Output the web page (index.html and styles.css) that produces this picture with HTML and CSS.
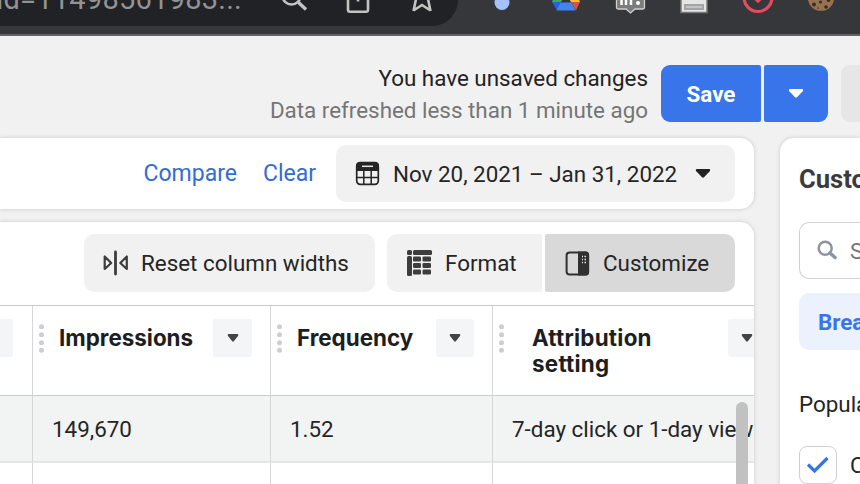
FILE: index.html
```html
<!DOCTYPE html>
<html lang="en">
<head>
<meta charset="utf-8">
<title>Ads reporting</title>
<link rel="stylesheet" href="styles.css">
</head>
<body>
<header class="browser">
  <div class="omnibox">
    <span class="url">id=11498561983...</span>
    <svg class="omni-icons" width="216" height="26" viewBox="242 0 216 26" fill="none" stroke="#c3c3c3" stroke-width="2.6">
      <circle cx="291.500" cy="-4.500" r="9"/><path d="M298 2l8 7.500" stroke-width="3.400"/>
      <path d="M348-8V10Q348 11.700 350 11.700H366Q368 11.700 368 10V-8M358-8V1.500"/>
      <path d="M413.500 11L416-1M430.500 11L428-1M413.500 10.500L422 5L430.500 10.500"/>
    </svg>
  </div>
  <svg class="extensions" width="402" height="34" viewBox="458 0 402 34">
    <circle cx="502" cy="2.500" r="7.500" fill="#a5c1fb"/>
    <path d="M552 2H561L557 10.500Z" fill="#2563d8"/><path d="M552 2L554-3H564L561 2Z" fill="#48a851"/>
    <path d="M571 2L568-3H578L580 2Z" fill="#f7bd38"/><path d="M571 2H580L576 10.500Z" fill="#dc5141"/>
    <path d="M560.500 2.500H571.500L575.500 10.500H556.500Z" fill="#4384f4"/>
    <path d="M616.500-3V7.500Q616.500 9 618 9H626L630.500 13L635 9H643Q644.500 9 644.500 7.500V-3Z" fill="#7c7c7c" stroke="#d0d2cf" stroke-width="1.300"/>
    <path d="M621.500-2V5M626-2V5M631-2V5" stroke="#fff" stroke-width="2.500"/><circle cx="638" cy="3" r="2" fill="#fff"/>
    <path d="M681-2H707V12.500H681Z" fill="#e5e5e5" stroke="#777" stroke-width="1.500"/><path d="M684 4H704V10H684Z" fill="#a4a4a4"/><path d="M686 7H702" stroke="#c5c5c5" stroke-width="2"/>
    <circle cx="758" cy="-2.500" r="14" fill="none" stroke="#e34c5c" stroke-width="3.200"/><path d="M753.500-1H762.500L758 3.300Z" fill="#e34c5c"/>
    <circle cx="821" cy="-2.500" r="13.300" fill="#947252"/><g fill="#3e2a20"><circle cx="814" cy="4.500" r="1.900"/><circle cx="820.500" cy="2" r="1.500"/><circle cx="826" cy="7" r="1.800"/><circle cx="828.500" cy="0" r="1.900"/><circle cx="818" cy="8" r=".8"/></g>
  </svg>
</header>

<section class="topbar">
  <div class="status">
    <div class="unsaved">You have unsaved changes</div>
    <div class="refreshed">Data refreshed less than 1 minute ago</div>
  </div>
  <button class="save">Save</button>
  <button class="save-menu"><svg width="16" height="11" viewBox="0 0 16 11"><path d="M2 1H14Q16 1.500 14.700 3.200L9 9.300Q8 10.200 7 9.300L1.300 3.200Q0 1.500 2 1Z" fill="#fff"/></svg></button>
  <div class="more"></div>
</section>

<main class="workspace">
  <div class="left">
    <section class="card date-card">
      <a class="link compare">Compare</a>
      <a class="link clear">Clear</a>
      <div class="date">
        <svg width="25" height="25" viewBox="0 0 25 25"><rect x="1.700" y="1.700" width="21.600" height="21.600" rx="3.500" fill="none" stroke="#252525" stroke-width="1.700"/><path d="M1 10V5Q1 1 5 1H20Q24 1 24 5V10Z" fill="#252525"/><path d="M7 5.300H18" stroke="#e5e5e5" stroke-width="1.500"/><path d="M1.500 16.500H23.500M8.800 9V23.500M16.200 9V23.500" stroke="#252525" stroke-width="1.500"/></svg>
        <span class="date-text">Nov 20, 2021 – Jan 31, 2022</span>
        <svg class="caret" width="16" height="11" viewBox="0 0 16 11"><path d="M2 1H14Q16 1.500 14.700 3.200L9 9.300Q8 10.200 7 9.300L1.300 3.200Q0 1.500 2 1Z" fill="#222"/></svg>
      </div>
    </section>

    <section class="card table-card">
      <div class="tools">
        <div class="tool reset">
          <svg width="26" height="26" viewBox="0 0 26 26" fill="none" stroke="#3d3d3d"><path d="M1.700 6.500V19L8.200 13ZM23.800 6.500V19L17.300 13Z" stroke-width="2.200" stroke-linejoin="round"/><path d="M12.500 2V24" stroke-width="2.800" stroke-linecap="round"/></svg>
          <span>Reset column widths</span>
        </div>
        <div class="tool format">
          <svg width="26" height="27" viewBox="0 0 26 27" fill="#3d3d3d"><rect width="5" height="5" rx="1.500"/><rect x="6" width="19" height="5" rx="1.500"/><rect y="6" width="5" height="20" rx="1.500"/><rect x="6" y="6.500" width="8" height="5" rx="1.300"/><rect x="15.500" y="6.500" width="8.500" height="5" rx="1.300"/><rect x="6" y="13" width="8" height="5" rx="1.300"/><rect x="15.500" y="13" width="8.500" height="5" rx="1.300"/><rect x="6" y="19.500" width="8" height="5" rx="1.300"/><rect x="15.500" y="19.500" width="8.500" height="5" rx="1.300"/></svg>
          <span>Format</span>
        </div>
        <div class="tool customize">
          <svg width="25" height="25" viewBox="0 0 25 25"><rect x="1.600" y="1.500" width="21.600" height="22" rx="3" fill="none" stroke="#303030" stroke-width="2"/><path d="M13 .5H21Q24 .5 24 4V21Q24 24.500 21 24.500H13Z" fill="#303030"/><path d="M17 5.500H18M19.500 5.500H21M17 8.500H18M19.500 8.500H21M17 11.500H18M19.500 11.500H21" stroke="#e5e5e5" stroke-width="1.300"/></svg>
          <span>Customize</span>
        </div>
      </div>

      <div class="grid">
        <div class="th edge"><i class="menu"></i></div>
        <div class="th">
          <svg class="grip" width="6" height="30" viewBox="0 0 6 30"><path d="M2.500 2.700h.01M2.500 10.700h.01M2.500 18.700h.01M2.500 26.300h.01" stroke="#cdced1" stroke-width="5" stroke-linecap="round"/></svg>
          <span class="name">Impressions</span>
          <i class="menu"><svg width="12" height="9" viewBox="0 0 12 9"><path d="M1.500 0H10.500Q12 .5 11 2L6.800 7.300Q6 8 5.200 7.300L1 2Q0 .5 1.500 0Z" fill="#444"/></svg></i>
        </div>
        <div class="th freq">
          <svg class="grip" width="6" height="30" viewBox="0 0 6 30"><path d="M2.500 2.700h.01M2.500 10.700h.01M2.500 18.700h.01M2.500 26.300h.01" stroke="#cdced1" stroke-width="5" stroke-linecap="round"/></svg>
          <span class="name">Frequency</span>
          <i class="menu"><svg width="12" height="9" viewBox="0 0 12 9"><path d="M1.500 0H10.500Q12 .5 11 2L6.800 7.300Q6 8 5.200 7.300L1 2Q0 .5 1.500 0Z" fill="#444"/></svg></i>
        </div>
        <div class="th attr">
          <svg class="grip" width="6" height="30" viewBox="0 0 6 30"><path d="M2.500 2.700h.01M2.500 10.700h.01M2.500 18.700h.01M2.500 26.300h.01" stroke="#cdced1" stroke-width="5" stroke-linecap="round"/></svg>
          <span class="name">Attribution<br>setting</span>
          <i class="menu"><svg width="12" height="9" viewBox="0 0 12 9"><path d="M1.500 0H10.500Q12 .5 11 2L6.800 7.300Q6 8 5.200 7.300L1 2Q0 .5 1.500 0Z" fill="#444"/></svg></i>
        </div>
        <div class="td edge"></div>
        <div class="td">149,670</div>
        <div class="td">1.52</div>
        <div class="td attr-value">7-day click or 1-day view</div>
        <div class="next edge"></div><div class="next"></div><div class="next"></div><div class="next"></div>
        <div class="scrollbar"></div>
      </div>
    </section>
  </div>

  <aside class="panel">
    <h2>Customize</h2>
    <div class="search">
      <svg width="21" height="21" viewBox="0 0 21 21" fill="none" stroke="#8d949f"><circle cx="8.200" cy="8.200" r="6.500" stroke-width="2.500"/><path d="M13 13L18 17.500" stroke-width="3.500" stroke-linecap="round"/></svg>
      <span>Search</span>
    </div>
    <div class="tab">Breakdowns</div>
    <div class="group">Popular</div>
    <div class="option">
      <span class="check"><svg width="26" height="20" viewBox="0 0 26 20"><path d="M3 9.500L9.500 16L22.500 3" fill="none" stroke="#3575ea" stroke-width="3.200"/></svg></span>
      <span>Campaign</span>
    </div>
  </aside>
</main>
</body>
</html>
```

FILE: styles.css
```css
* { box-sizing: border-box; }
body {
  margin: 0; width: 860px; height: 484px; overflow: hidden;
  display: flex; flex-direction: column;
  background: #f1f1f1; color: #252525;
  font: 22.4px/26px Roboto, "Liberation Sans", sans-serif;
  white-space: nowrap;
}
svg { display: block; flex: none; }
button { border: 0; padding: 0; font: inherit; }

.browser { flex: none; height: 36px; display: flex; background: #36373b; border-bottom: 2px solid #626266; }
.omnibox { width: 458px; height: 26px; display: flex; overflow: hidden; background: #212226; border-radius: 0 0 26px 0; }
.url { flex: none; width: 242px; height: 32px; margin-top: -17px; display: flex; justify-content: flex-end; color: #939395; font-size: 29px; line-height: 32px; letter-spacing: .25px; overflow: hidden; }

.topbar { flex: none; height: 102px; padding-top: 29px; display: flex; align-items: flex-start; overflow: hidden; }
.status { width: 648px; margin-right: 13px; text-align: right; line-height: 32px; margin-top: -3px; }
.status, .save, .save-menu, .more { flex: none; }
.unsaved { color: #222; }
.refreshed { color: #757575; }
.save { width: 100px; height: 57px; background: #3875ea; color: #fff; font-weight: 700; border-radius: 9px 2px 2px 9px; }
.save-menu { width: 64px; height: 57px; margin-left: 3px; background: #3875ea; border-radius: 2px 9px 9px 2px; display: flex; align-items: center; justify-content: center; }
.more { width: 19px; height: 57px; margin-left: 13px; background: #e6e6e6; border-radius: 9px 0 0 9px; }

.workspace { height: 346px; display: flex; gap: 26px; }
.left { flex: none; width: 754px; display: flex; flex-direction: column; gap: 13px; }
.card { background: #fff; box-shadow: 0 0 4px rgba(0,0,0,.17); }
.date-card { flex: none; height: 71px; padding: 7px 19px 7px 0; display: flex; align-items: center; justify-content: flex-end; border-radius: 0 14px 14px 0; }
.link { color: #356bd4; margin: 0 26px 0 0; font-size: 23px; }
.clear { margin-right: 20px; }
.date { width: 399px; height: 57px; padding-left: 19px; display: flex; align-items: center; background: #f1f1f1; border-radius: 10px; }
.date-text { width: 284px; margin: 0 18px 0 13px; }

.table-card { flex: 1; border-radius: 0 14px 0 0; overflow: hidden; display: flex; flex-direction: column; }
.tools { flex: none; height: 83px; padding: 12px 19px 0 84px; display: flex; }
.tool { height: 58px; display: flex; align-items: center; background: #f1f1f1; }
.reset { width: 291px; margin-right: 12px; padding-left: 19px; gap: 12px; border-radius: 10px; }
.format { width: 155px; margin-right: 3px; padding-left: 20px; gap: 12px; border-radius: 10px 2px 2px 10px; }
.customize { width: 190px; padding-left: 20px; gap: 13px; background: #d9d9d9; border-radius: 2px 10px 10px 2px; }

.grid { position: relative; flex: none; display: grid; grid-template-columns: 32px 238px 222px 262px; grid-template-rows: 90px 67px 22px; border-top: 1px solid #c8c8c8; }
.grid > div:not(.edge):not(.scrollbar) { border-left: 1px solid #d5d6d7; }
.th { padding: 13px 18px 0 6px; display: flex; align-items: flex-start; border-bottom: 1px solid #ccc; font: 700 22.4px/26px Inter, "Liberation Sans", sans-serif; color: #1c1e21; overflow: hidden; }
.grip { margin: 5px 0 0; }
.name { margin: 6px 0 0 14px; }
.menu { flex: none; width: 39px; height: 38px; margin-left: auto; background: #f4f5f7; border-radius: 3px; display: flex; align-items: center; justify-content: center; }
.th.edge { padding: 13px 19px 0 0; justify-content: flex-end; }
.freq { padding-right: 18px; }
.freq .menu { width: 38px; }
.attr { padding-right: 0; }
.attr .name { flex: none; width: 140px; margin-left: 27px; letter-spacing: .25px; }
.attr .menu { width: 38px; margin-left: 56px; }
.td { padding: 20px 0 0 19px; background: #f2f4f3; border-bottom: 2px solid #e4e6e5; overflow: hidden; }
.scrollbar { position: absolute; left: 736px; top: 96px; width: 12px; height: 100px; border-radius: 6px; background: #c1c1c1; }

.panel { flex: none; width: 80px; padding: 28px 0 0 19px; background: #fff; border-radius: 14px 0 0 0; box-shadow: 0 0 4px rgba(0,0,0,.17); overflow: hidden; }
.panel h2 { margin: 0 0 30px; font-size: 25.6px; line-height: 26px; color: #3b3b3b; }
.search { height: 57px; padding-left: 17px; display: flex; align-items: center; gap: 12px; border: 1px solid #d2d2d2; border-right: 0; border-radius: 10px 0 0 10px; color: #757575; }
.tab { height: 57px; margin-top: 14px; padding-left: 19px; line-height: 58px; background: #ebf1fd; color: #3875ea; font-weight: 700; border-radius: 10px 0 0 10px; }
.group { margin-top: 41px; }
.option { margin-top: 29px; display: flex; align-items: center; gap: 13px; }
.check { flex: none; width: 38px; height: 38px; display: flex; align-items: center; justify-content: center; border: 1px solid #d0d0d0; border-radius: 8px; }
```
